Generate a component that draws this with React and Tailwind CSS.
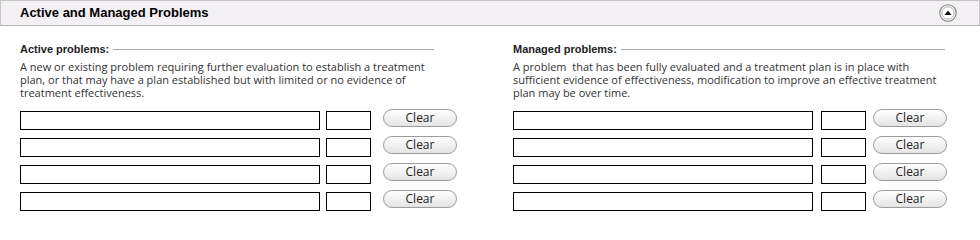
const rows = [0, 1, 2, 3]

const Collapse = () => (
  <svg width="18" height="18" viewBox="0 0 18 18">
    <circle cx="9" cy="9" r="8.2" fill="#fff" stroke="#7d7d7d" strokeWidth="1.1" />
    <circle cx="9" cy="9" r="6.2" fill="#fff" stroke="#b0b0b0" strokeWidth="1" />
    <path d="M5.5 11 L9 6.5 L12.5 11 Z" fill="#111" />
  </svg>
)

const Row = ({ gap1, gap2 }) => (
  <div className="flex items-start">
    <input className="mt-[2px] h-[19px] w-[300px] border border-black bg-white" />
    <input className={`mt-[2px] h-[19px] w-[45px] border border-black bg-white ${gap1}`} />
    <button className={`h-[18px] w-[74px] rounded-full border border-[#9c9c9c] bg-gradient-to-b from-white to-[#e4e4e4] font-['Open_Sans',sans-serif] text-[12px] leading-none text-[#222] ${gap2}`}>
      Clear
    </button>
  </div>
)

const Section = ({ title, lines, lineWidth, gap1, gap2, width }) => (
  <div className={width}>
    <div className={`flex items-center gap-1 ${lineWidth}`}>
      <span className="text-[11px] font-bold leading-[13px] text-[#222]">{title}</span>
      <div className="h-px flex-1 bg-[#a8a8a8]"></div>
    </div>
    <p className="mt-[4px] font-['Open_Sans',sans-serif] text-[11px] leading-[13px] text-[#333]">
      {lines.map((l, i) => (
        <span key={i} className="block whitespace-pre">{l}</span>
      ))}
    </p>
    <div className="mt-[10px] flex flex-col gap-[6px]">
      {rows.map((r) => (
        <Row key={r} gap1={gap1} gap2={gap2} />
      ))}
    </div>
  </div>
)

export default function App() {
  return (
    <div className="h-[227px] w-[980px] bg-white font-['Liberation_Sans',sans-serif]">
      {/* header bar */}
      <div className="flex h-[26px] items-center justify-between border border-[#c6c6c6] border-b-[#b0b0b0] bg-[#f3f0f4] pl-[19px] pr-[22px]">
        <span className="text-[13px] font-bold text-black">Active and Managed Problems</span>
        <Collapse />
      </div>

      <div className="flex pl-5 pt-[17px]">
        <Section
          width="w-[493px]"
          lineWidth="w-[414px]"
          gap1="ml-[6px]"
          gap2="ml-[12px]"
          title="Active problems:"
          lines={[
            'A new or existing problem requiring further evaluation to establish a treatment',
            'plan, or that may have a plan established but with limited or no evidence of',
            'treatment effectiveness.',
          ]}
        />
        <Section
          width="w-[434px]"
          lineWidth="w-[432px]"
          gap1="ml-[8px]"
          gap2="ml-[7px]"
          title="Managed problems:"
          lines={[
            'A problem  that has been fully evaluated and a treatment plan is in place with',
            'sufficient evidence of effectiveness, modification to improve an effective treatment',
            'plan may be over time.',
          ]}
        />
      </div>
    </div>
  )
}
